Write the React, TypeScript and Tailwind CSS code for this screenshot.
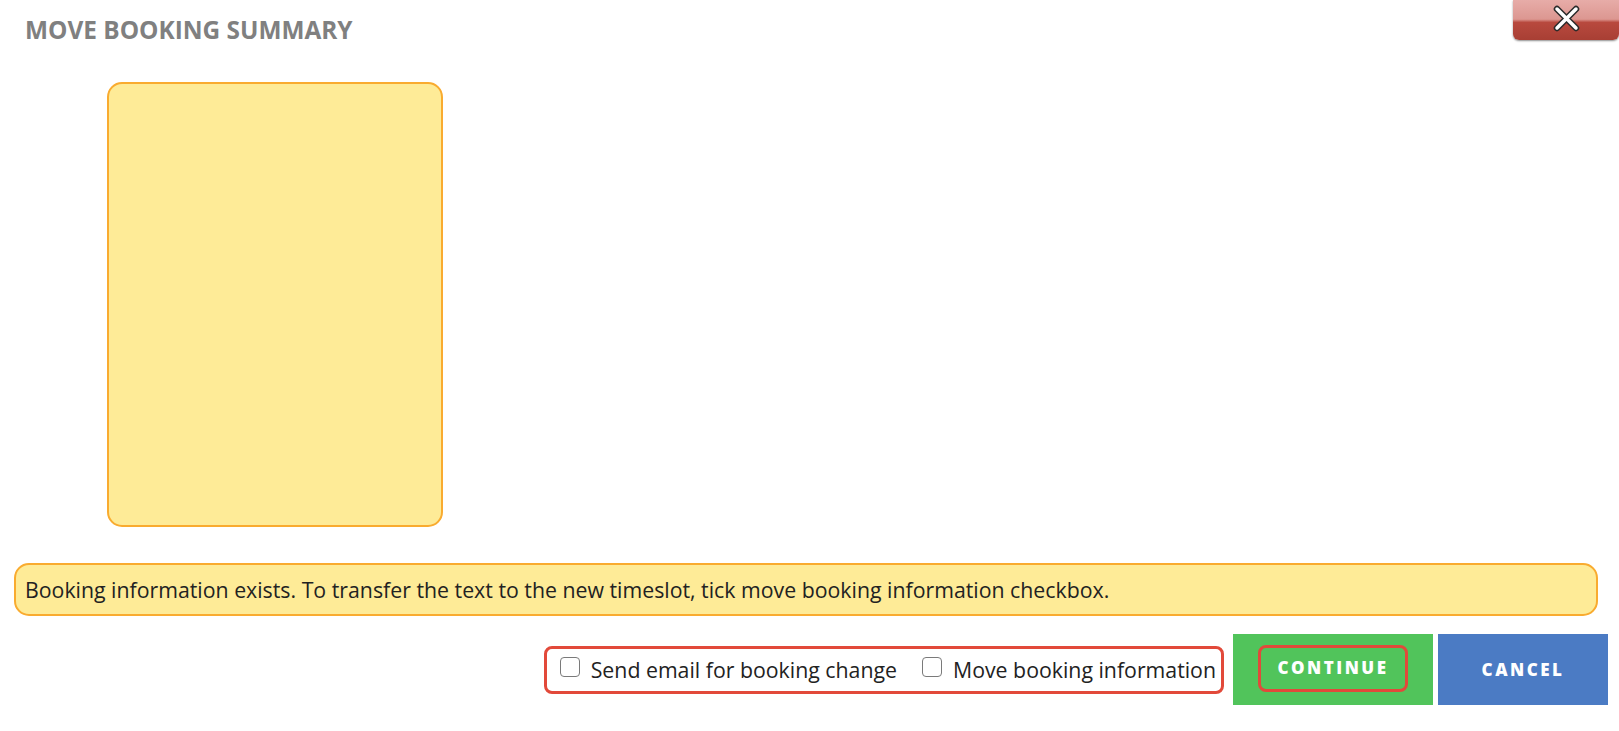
import React from 'react';

const Checkbox = ({ label }: { label: string }) => (
  <label className="flex items-center gap-[11px] cursor-pointer">
    <input
      type="checkbox"
      className="appearance-none w-[20px] h-[20px] border border-[#7a7a7a] rounded-[4px] bg-white -mt-[6px]"
    />
    <span className="text-[21.3px] leading-[28px] text-[#222]">{label}</span>
  </label>
);

export default function App() {
  return (
    <div className="relative w-full h-[731px] bg-white overflow-hidden font-['Open_Sans',sans-serif]">
      {/* Close button */}
      <button className="absolute top-0 right-0 w-[106px] h-[40px] flex justify-center pt-[5px] rounded-b-[6px] bg-[linear-gradient(to_bottom,#e7aca8_0%,#dc9791_48%,#b8493e_56%,#a83f34_100%)] shadow-[0_1px_2px_rgba(0,0,0,0.45)]">
        <svg width="27" height="27" viewBox="0 0 27 27">
          <g strokeLinecap="round">
            <path d="M4 4 L23 23 M23 4 L4 23" stroke="#2b2b2b" strokeWidth="6.5" />
            <path d="M4 4 L23 23 M23 4 L4 23" stroke="#ffffff" strokeWidth="3.5" />
          </g>
        </svg>
      </button>

      {/* Title */}
      <h1 className="pt-[15px] pl-[25px] text-[24.4px] leading-[30px] font-bold text-[#808080]">
        MOVE BOOKING SUMMARY
      </h1>

      {/* Booking card */}
      <div className="ml-[107px] mt-[37px] w-[336px] h-[445px] rounded-[15px] border-2 border-[#f9ab2f] bg-[#feeb97]" />

      {/* Info message */}
      <div className="ml-[14px] mr-[21px] mt-[36px] h-[53px] flex items-center pl-[9px] rounded-[15px] border-2 border-[#f9ab2f] bg-[#feeb97]">
        <span className="text-[21.3px] leading-[28px] text-[#222]">
          Booking information exists. To transfer the text to the new timeslot, tick move booking information checkbox.
        </span>
      </div>

      {/* Actions */}
      <div className="mt-[18px] flex items-center justify-end pr-[11px]">
        <div className="h-[48px] flex items-center gap-[25px] pl-[13px] pr-[5px] rounded-[8px] border-[3px] border-[#e2493a]">
          <Checkbox label="Send email for booking change" />
          <Checkbox label="Move booking information" />
        </div>
        <button className="ml-[9px] w-[200px] h-[71px] flex items-center justify-center bg-[#51c45b]">
          <span className="w-[150px] h-[47px] flex items-center justify-center rounded-[8px] border-[3px] border-[#e2493a] text-white text-[17px] font-extrabold tracking-[2.5px] -mt-[3px]">
            CONTINUE
          </span>
        </button>
        <button className="ml-[5px] w-[170px] h-[71px] flex items-center justify-center bg-[#4b7bc4] text-white text-[17px] font-extrabold tracking-[2.5px]">
          CANCEL
        </button>
      </div>
    </div>
  );
}
